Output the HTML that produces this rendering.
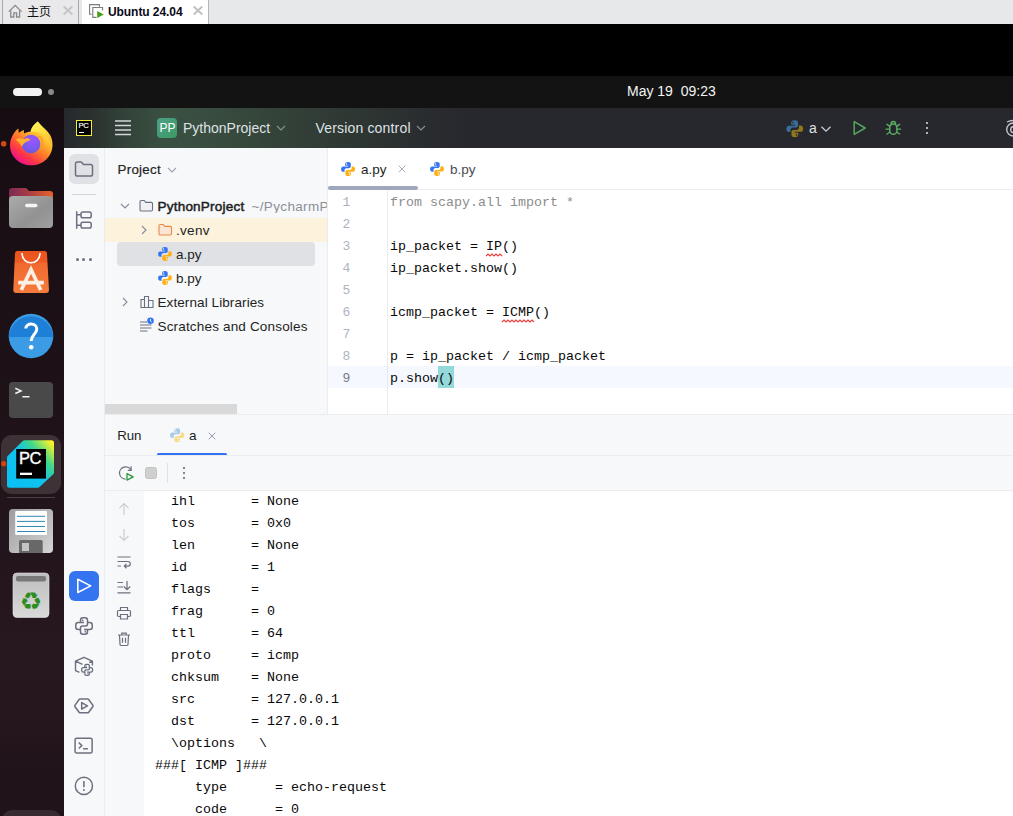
<!DOCTYPE html>
<html lang="en">
<head>
<meta charset="utf-8">
<title>Ubuntu 24.04</title>
<style>
*{box-sizing:border-box;margin:0;padding:0}
html,body{width:1013px;height:816px;overflow:hidden;background:#000}
body{position:relative;font-family:"Liberation Sans","Noto Sans CJK SC",sans-serif;font-size:13px;color:#000}
.abs{position:absolute}
.t{position:absolute;white-space:pre;line-height:1}
svg{position:absolute;overflow:visible}
/* vm tab bar */
#vmbar{left:0;top:0;width:1013px;height:24px;background:#e7e8ea}
#vmtab1{left:2px;top:0;width:77px;height:24px;background:#e9e9eb;border-left:1px solid #a9a9a9;border-right:1px solid #a9a9a9}
#vmtab2{left:82px;top:0;width:127px;height:24px;background:#fff;border-right:1px solid #b5b5b5}
/* gnome */
#gbar{left:0;top:76px;width:1013px;height:32px;background:#131313}
#dock{left:0;top:108px;width:64px;height:708px;background:linear-gradient(180deg,#160d12 0%,#1b1016 27%,#21141b 55%,#27171f 76%,#26161e 86%,#20131a 95%,#20131a 100%)}
/* pycharm */
#ptitle{left:64px;top:108px;width:949px;height:39.5px;background:linear-gradient(90deg,#26282d 0px,#2b322f 30px,#33433a 62px,#3a5041 100px,#394e40 140px,#344339 210px,#2e3733 290px,#292b2f 370px,#27282e 410px)}
#pleft{left:64px;top:147.5px;width:41px;height:668.5px;background:#f7f8fa;border-right:1px solid #ebecf0}
#proj{left:105px;top:147.5px;width:223px;height:266.5px;background:#f7f8fa;border-right:1px solid #ebecf0}
#editor{left:328px;top:147.5px;width:685px;height:266.5px;background:#fff}
#run{left:105px;top:414px;width:908px;height:402px;background:#f7f8fa;border-top:1px solid #ebecf0}
#console{left:144px;top:491px;width:869px;height:325px;background:#fff}
.mono{font-family:"Liberation Mono",monospace;font-size:13.333px;line-height:22px;white-space:pre;position:absolute;color:#080808}
.ui{color:#1e1f22}
</style>
</head>
<body>
<!-- VMware tab bar -->
<div class="abs" id="vmbar"></div>
<div class="abs" id="vmtab1"></div>
<div class="abs" id="vmtab2"></div>
<span class="t" id="t_home" style="left:27px;top:6px;font-size:12px;color:#111">主页</span>
<span class="t" id="t_ubu" style="left:108px;top:6px;font-size:12px;font-weight:bold;color:#0a0a1a;letter-spacing:-0.07px">Ubuntu 24.04</span>

<!-- GNOME top bar -->
<div class="abs" id="gbar"></div>
<div class="abs" style="left:13px;top:87.6px;width:29px;height:8.6px;border-radius:4.3px;background:#f2f2f2"></div>
<div class="abs" style="left:48px;top:89px;width:6px;height:6px;border-radius:3px;background:#8a8a8a"></div>
<span class="t" id="t_clock" style="left:627px;top:84px;font-size:14px;color:#f4f4f4">May 19  09:23</span>

<!-- Dock -->
<div class="abs" id="dock"></div>

<!-- PyCharm -->
<div class="abs" id="ptitle"></div>
<div class="abs" id="pleft"></div>
<div class="abs" id="proj"></div>
<div class="abs" id="editor"></div>
<div class="abs" id="run"></div>
<div class="abs" id="console"></div>


<!-- title bar content -->
<div class="abs" style="left:76px;top:120px;width:16px;height:16px;background:#000;border:1px solid #f3ec30"></div>
<span class="t" id="t_pclogo" style="left:78.6px;top:122px;font-size:7.6px;color:#fff;letter-spacing:-0.5px;-webkit-text-stroke:0.15px #fff">PC</span>
<div class="abs" style="left:79px;top:131.5px;width:5px;height:1.2px;background:#fff"></div>
<svg style="left:115px;top:118px;filter:blur(0.3px)" width="16" height="20" viewBox="0 0 16 20"><path d="M0 3.1 H16 M0 7.6 H16 M0 12.1 H16 M0 16.6 H16" stroke="#d3d5da" stroke-width="1.5"/></svg>
<div class="abs" style="left:157px;top:118px;width:20px;height:20px;border-radius:4px;background:linear-gradient(135deg,#4ca088,#3c9a63)"></div>
<span class="t" id="t_pp" style="left:159.5px;top:122px;font-size:12px;color:#fff">PP</span>
<span class="t" id="t_pname" style="left:183px;top:121px;font-size:14px;color:#dfe1e5">PythonProject</span>
<svg style="left:276px;top:125px" width="10" height="6" viewBox="0 0 10 6"><path d="M1 1 L5 5 L9 1" fill="none" stroke="#8d9096" stroke-width="1.1"/></svg>
<span class="t" id="t_vc" style="left:315.5px;top:121px;font-size:14px;color:#dfe1e5;letter-spacing:0.17px">Version control</span>
<svg style="left:416px;top:125px" width="10" height="6" viewBox="0 0 10 6"><path d="M1 1 L5 5 L9 1" fill="none" stroke="#8d9096" stroke-width="1.1"/></svg>
<span class="t" id="t_cfg" style="left:809px;top:121px;font-size:14px;color:#dfe1e5">a</span>
<svg style="left:821px;top:125.5px" width="10" height="6" viewBox="0 0 10 6"><path d="M0.5 0.8 L5 5.2 L9.5 0.8" fill="none" stroke="#ced0d6" stroke-width="1.2"/></svg>
<svg style="left:852px;top:120px" width="16" height="16" viewBox="0 0 16 16"><path d="M2.2 1.6 L13.2 8 L2.2 14.4 Z" fill="none" stroke="#57a55a" stroke-width="1.5" stroke-linejoin="round"/></svg>
<svg id="bug" style="left:885px;top:120px" width="16" height="16" viewBox="0 0 16 16" fill="none" stroke="#5bae60" stroke-width="1.4" stroke-linecap="round"><path d="M4.7 7.6 a3.6 3.6 0 0 1 7.2 0 v3.1 a3.6 3.6 0 0 1 -7.2 0 Z"/><path d="M6.1 3.7 a2.2 2.2 0 0 1 4.4 0" stroke-width="1.6"/><path d="M4.7 9.1 H1 M11.9 9.1 H15.6 M5 6.3 L2 4.3 M11.6 6.3 L14.6 4.3 M5 12 L2 14 M11.6 12 L14.6 14"/></svg>
<div class="abs" style="left:925.8px;top:121.5px;width:2.4px;height:2.4px;border-radius:1.2px;background:#dfe1e5"></div>
<div class="abs" style="left:925.8px;top:126.8px;width:2.4px;height:2.4px;border-radius:1.2px;background:#dfe1e5"></div>
<div class="abs" style="left:925.8px;top:132px;width:2.4px;height:2.4px;border-radius:1.2px;background:#dfe1e5"></div>
<svg style="left:1000px;top:116px" width="20" height="20" viewBox="0 0 20 20" fill="none" stroke="#c4c6cc" stroke-width="1.4"><circle cx="13.2" cy="13.5" r="6.5"/><circle cx="13.7" cy="13.7" r="3"/><path d="M7 6 Q10 4.3 14 4.5"/></svg>

<svg width="0" height="0" style="left:0;top:0"><defs>
<symbol id="py" viewBox="0 0 16 16">
<path d="M8 1.1C6 1.1 5.1 1.8 5.1 3.1V4.65H8.1V5.45H3.2C1.8 5.45 1.1 6.5 1.1 8.05C1.1 9.6 1.8 10.65 3.2 10.65H4.5V9.1C4.5 7.9 5.4 7.05 6.6 7.05H8.9C9.9 7.05 10.7 6.3 10.7 5.3V3.1C10.7 1.8 9.9 1.1 8 1.1Z" fill="#3574f0"/>
<circle cx="6.5" cy="2.95" r=".7" fill="#fff"/>
<path d="M8 14.9C10 14.9 10.9 14.2 10.9 12.9V11.35H7.9V10.55H12.8C14.2 10.55 14.9 9.5 14.9 7.95C14.9 6.4 14.2 5.35 12.8 5.35H11.5V6.9C11.5 8.1 10.6 8.95 9.4 8.95H7.1C6.1 8.95 5.3 9.7 5.3 10.7V12.9C5.3 14.2 6.1 14.9 8 14.9Z" fill="#ffaf0f"/>
<circle cx="9.5" cy="13.05" r=".7" fill="#fff"/>
</symbol>
<symbol id="pyreal" viewBox="0 0 16 16">
<path d="M8 1.1C6 1.1 5.1 1.8 5.1 3.1V4.65H8.1V5.45H3.2C1.8 5.45 1.1 6.5 1.1 8.05C1.1 9.6 1.8 10.65 3.2 10.65H4.5V9.1C4.5 7.9 5.4 7.05 6.6 7.05H8.9C9.9 7.05 10.7 6.3 10.7 5.3V3.1C10.7 1.8 9.9 1.1 8 1.1Z" fill="#3a6d95"/>
<circle cx="6.5" cy="2.95" r=".7" fill="#2b2d30"/>
<path d="M8 14.9C10 14.9 10.9 14.2 10.9 12.9V11.35H7.9V10.55H12.8C14.2 10.55 14.9 9.5 14.9 7.95C14.9 6.4 14.2 5.35 12.8 5.35H11.5V6.9C11.5 8.1 10.6 8.95 9.4 8.95H7.1C6.1 8.95 5.3 9.7 5.3 10.7V12.9C5.3 14.2 6.1 14.9 8 14.9Z" fill="#92751f"/>
<circle cx="9.5" cy="13.05" r=".7" fill="#2b2d30"/>
</symbol>
<symbol id="pyfade" viewBox="0 0 16 16">
<path d="M8 1.1C6 1.1 5.1 1.8 5.1 3.1V4.65H8.1V5.45H3.2C1.8 5.45 1.1 6.5 1.1 8.05C1.1 9.6 1.8 10.65 3.2 10.65H4.5V9.1C4.5 7.9 5.4 7.05 6.6 7.05H8.9C9.9 7.05 10.7 6.3 10.7 5.3V3.1C10.7 1.8 9.9 1.1 8 1.1Z" fill="#a9cbe5"/>
<circle cx="6.5" cy="2.95" r=".7" fill="#f7f8fa"/>
<path d="M8 14.9C10 14.9 10.9 14.2 10.9 12.9V11.35H7.9V10.55H12.8C14.2 10.55 14.9 9.5 14.9 7.95C14.9 6.4 14.2 5.35 12.8 5.35H11.5V6.9C11.5 8.1 10.6 8.95 9.4 8.95H7.1C6.1 8.95 5.3 9.7 5.3 10.7V12.9C5.3 14.2 6.1 14.9 8 14.9Z" fill="#f8dc8b"/>
<circle cx="9.5" cy="13.05" r=".7" fill="#f7f8fa"/>
</symbol>
<symbol id="chd" viewBox="0 0 10 6"><path d="M1 1 L5 5 L9 1" fill="none" stroke="#868a99" stroke-width="1.1"/></symbol>
<symbol id="chr" viewBox="0 0 6 10"><path d="M1 1 L5 5 L1 9" fill="none" stroke="#868a99" stroke-width="1.1"/></symbol>
</defs></svg>
<svg style="left:785px;top:118.5px" width="19.5" height="19.5"><use href="#pyreal"/></svg>

<!-- Project tool window -->
<div class="abs" style="left:69px;top:154px;width:30px;height:30px;border-radius:6px;background:#dfe1e5"></div>
<svg style="left:74px;top:159px" width="20" height="20" viewBox="0 0 20 20"><path d="M1.5 4.8 a1.8 1.8 0 0 1 1.8-1.8 h4 l2.2 2.6 h7.2 a1.8 1.8 0 0 1 1.8 1.8 v7.8 a1.8 1.8 0 0 1 -1.8 1.8 h-13.4 a1.8 1.8 0 0 1 -1.8-1.8 Z" fill="none" stroke="#6c707e" stroke-width="1.5"/></svg>
<div class="abs" style="left:72px;top:194px;width:24px;height:1px;background:#d3d5db"></div>
<svg style="left:74px;top:210px" width="20" height="20" viewBox="0 0 20 20" fill="none" stroke="#6c707e" stroke-width="1.5"><path d="M2.7 1.2 V18.8 M2.7 4.85 H7 M2.7 15.150 H7"/><rect x="7" y="1.950" width="10.2" height="5.8" rx="1.8"/><rect x="7" y="12.25" width="10.2" height="5.8" rx="1.8"/></svg>
<div class="abs" style="left:76px;top:257.9px;width:3px;height:3px;border-radius:1.5px;background:#6c707e"></div>
<div class="abs" style="left:82.2px;top:257.9px;width:3px;height:3px;border-radius:1.5px;background:#6c707e"></div>
<div class="abs" style="left:88.9px;top:257.9px;width:3px;height:3px;border-radius:1.5px;background:#6c707e"></div>

<span class="t ui" id="t_project" style="left:117.5px;top:163px;font-size:13.3px;letter-spacing:0.3px;color:#1e1f22;-webkit-text-stroke:0.2px #1e1f22">Project</span>
<svg style="left:167px;top:167px;opacity:.8" width="10" height="6"><use href="#chd"/></svg>

<div class="abs" style="left:105px;top:218px;width:222px;height:24px;background:#fdf3dd"></div>
<div class="abs" style="left:117px;top:242.2px;width:198px;height:23.5px;border-radius:4px;background:#dfe1e5"></div>

<svg style="left:120px;top:203px" width="10" height="6"><use href="#chd"/></svg>
<svg style="left:138.5px;top:198.5px" width="15" height="14" viewBox="0 0 15 14"><path d="M1 2.7 a1.2 1.2 0 0 1 1.2-1.2 h3 l1.6 1.9 h5.5 a1.2 1.2 0 0 1 1.2 1.2 v6.2 a1.2 1.2 0 0 1 -1.2 1.2 h-10.1 a1.2 1.2 0 0 1 -1.2-1.2 Z" fill="#f0f1f4" stroke="#6c707e" stroke-width="1.1"/></svg>
<span class="t" id="t_root" style="left:157.5px;top:199.7px;font-size:13.5px;color:#1e1f22;letter-spacing:0.22px;-webkit-text-stroke:0.5px #1e1f22">PythonProject</span>
<span class="t" id="t_path" style="left:251.5px;top:199.7px;font-size:13.5px;color:#8c8f98;letter-spacing:0.35px;width:75.5px;overflow:hidden">~/PycharmP</span>

<svg style="left:141px;top:225px" width="6" height="10"><use href="#chr"/></svg>
<svg style="left:157.5px;top:222.5px" width="15" height="14" viewBox="0 0 15 14"><path d="M1 2.7 a1.2 1.2 0 0 1 1.2-1.2 h3 l1.6 1.9 h5.5 a1.2 1.2 0 0 1 1.2 1.2 v6.2 a1.2 1.2 0 0 1 -1.2 1.2 h-10.1 a1.2 1.2 0 0 1 -1.2-1.2 Z" fill="#fbe6d6" stroke="#e8894a" stroke-width="1.1"/></svg>
<span class="t ui" id="t_venv" style="left:176px;top:223.7px;font-size:13.5px;letter-spacing:0.3px">.venv</span>

<svg style="left:157px;top:246px" width="16" height="16"><use href="#py"/></svg>
<span class="t ui" id="t_apy" style="left:176px;top:247.7px;font-size:13.5px">a.py</span>
<svg style="left:157px;top:270px" width="16" height="16"><use href="#py"/></svg>
<span class="t ui" id="t_bpy" style="left:176px;top:271.7px;font-size:13.5px">b.py</span>

<svg style="left:122px;top:297px" width="6" height="10"><use href="#chr"/></svg>
<svg style="left:138.8px;top:294.3px" width="16" height="16" viewBox="0 0 16 16" fill="none" stroke="#6c707e" stroke-width="1.1"><path d="M2 13.5 V5.5 H5.5 V13.5 Z M5.5 13.5 V2.5 H9.5 V13.5 Z M9.5 13.5 V6.5 H14 V13.5 Z"/></svg>
<span class="t ui" id="t_ext" style="left:157.5px;top:295.7px;font-size:13.5px;letter-spacing:0.09px">External Libraries</span>

<svg style="left:138.3px;top:316.8px" width="16" height="16" viewBox="0 0 16 16" fill="none" stroke="#6c707e" stroke-width="1.1"><path d="M2 5 H9 M2 8 H13.5 M2 11 H13.5 M2 14 H9.5"/><circle cx="12.5" cy="3.8" r="3.3" fill="#3574f0" stroke="none"/><path d="M12.5 2 V4 L13.7 4.8" stroke="#fff" stroke-width="0.9"/></svg>
<span class="t ui" id="t_scr" style="left:157.5px;top:319.7px;font-size:13.5px;letter-spacing:0.17px">Scratches and Consoles</span>

<div class="abs" style="left:105px;top:404px;width:132px;height:10px;background:#d9d9d9"></div>

<!-- Editor tabs -->
<svg style="left:340px;top:160.8px" width="16.2" height="16.2"><use href="#py"/></svg>
<span class="t" id="t_tab1" style="left:361px;top:163px;font-size:13.5px;color:#1e1f22">a.py</span>
<svg style="left:398px;top:165px" width="8" height="8" viewBox="0 0 8 8"><path d="M0.7 0.7 L7.3 7.3 M7.3 0.7 L0.7 7.3" stroke="#a8adbd" stroke-width="1"/></svg>
<svg style="left:429px;top:161px" width="16" height="16"><use href="#py"/></svg>
<span class="t" id="t_tab2" style="left:450px;top:163px;font-size:13.5px;color:#494b57">b.py</span>
<div class="abs" style="left:328px;top:189px;width:685px;height:1px;background:#ebecf0"></div>
<div class="abs" style="left:328px;top:186.2px;width:90px;height:3.6px;border-radius:2px;background:#a0a6bb"></div>
<div class="abs" style="left:387px;top:190px;width:1px;height:224px;background:#ebecf0"></div>
<div class="abs" style="left:328px;top:365.8px;width:685px;height:22px;background:#f5f8fe"></div>
<div class="abs" style="left:387px;top:365.8px;width:1px;height:22px;background:#e6e9f2"></div>
<div class="abs" style="left:438px;top:365.8px;width:16px;height:22px;background:#93d9d9"></div>
<div class="mono" id="lnums" style="left:342.5px;top:191.7px;color:#aeb3c2;font-size:13px">1
2
3
4
5
6
7
8
<span style="color:#767a8a">9</span></div>
<div class="mono" id="code" style="left:390px;top:191.6px"><span style="color:#8c8c8c">from scapy.all import *</span>

ip_packet = IP()
ip_packet.show()

icmp_packet = ICMP()

p = ip_packet / icmp_packet
p.show()</div>
<svg style="left:486px;top:253px" width="16" height="4" viewBox="0 0 16 4"><path d="M0 3 L2 1 L4 3 L6 1 L8 3 L10 1 L12 3 L14 1 L16 3" fill="none" stroke="#ea3f3b" stroke-width="1.1"/></svg>
<svg style="left:502px;top:319px" width="32" height="4" viewBox="0 0 32 4"><path d="M0 3 L2 1 L4 3 L6 1 L8 3 L10 1 L12 3 L14 1 L16 3 L18 1 L20 3 L22 1 L24 3 L26 1 L28 3 L30 1 L32 3" fill="none" stroke="#ea3f3b" stroke-width="1.1"/></svg>

<!-- Run tool window -->
<span class="t" id="t_run" style="left:117.3px;top:428.5px;font-size:13.3px;letter-spacing:-0.2px;color:#1e1f22">Run</span>
<svg style="left:168.8px;top:426.8px" width="16.5" height="16.5"><use href="#pyfade"/></svg>
<span class="t" id="t_runa" style="left:189px;top:428.5px;font-size:13.5px;color:#1e1f22">a</span>
<svg style="left:208px;top:432px" width="8" height="8" viewBox="0 0 8 8"><path d="M0.7 0.7 L7.3 7.3 M7.3 0.7 L0.7 7.3" stroke="#999db2" stroke-width="1"/></svg>
<div class="abs" style="left:157px;top:452.5px;width:70px;height:3.7px;border-radius:2px;background:#3574f0"></div>
<div class="abs" style="left:105px;top:455.2px;width:908px;height:1px;background:#ebecf0"></div>
<div class="abs" style="left:105px;top:490px;width:908px;height:1px;background:#ebecf0"></div>
<!-- run toolbar -->
<svg style="left:117.5px;top:465px" width="16" height="16" viewBox="0 0 16 16" fill="none"><path d="M13.1 5.3 A6.1 6.1 0 1 0 7.6 14.1" stroke="#6c707e" stroke-width="1.2"/><path d="M13.1 1.2 V5.3 H9.8" stroke="#6c707e" stroke-width="1.2"/><path d="M9 8.6 V15.1 L15.2 11.85 Z" stroke="#2c9a3e" stroke-width="1.3" stroke-linejoin="round" fill="#f7f8fa"/></svg>
<div class="abs" style="left:145px;top:467px;width:12px;height:12px;border-radius:2.5px;background:#cfcfcf;border:1px solid #c3c3c3"></div>
<div class="abs" style="left:167px;top:463px;width:1px;height:20px;background:#dfe1e5"></div>
<div class="abs" style="left:182.9px;top:466.9px;width:2.2px;height:2.2px;border-radius:.7px;background:#6c707e"></div>
<div class="abs" style="left:182.9px;top:471.9px;width:2.2px;height:2.2px;border-radius:.7px;background:#6c707e"></div>
<div class="abs" style="left:182.9px;top:476.9px;width:2.2px;height:2.2px;border-radius:.7px;background:#6c707e"></div>
<!-- console -->
<div class="mono" id="cons" style="left:155px;top:491px">  ihl       = None
  tos       = 0x0
  len       = None
  id        = 1
  flags     = 
  frag      = 0
  ttl       = 64
  proto     = icmp
  chksum    = None
  src       = 127.0.0.1
  dst       = 127.0.0.1
  \options   \
###[ ICMP ]###
     type      = echo-request
     code      = 0</div>

<!-- run gutter icons -->
<svg style="left:116px;top:500.7px" width="16" height="16" viewBox="0 0 16 16" fill="none" stroke="#cdced3" stroke-width="1.2"><path d="M8 14 V2.5 M3.5 7 L8 2.5 L12.5 7"/></svg>
<svg style="left:116px;top:527.4px" width="16" height="16" viewBox="0 0 16 16" fill="none" stroke="#cdced3" stroke-width="1.2"><path d="M8 2 V13.5 M3.5 9 L8 13.5 L12.5 9"/></svg>
<svg style="left:116px;top:553.6px" width="16" height="16" viewBox="0 0 16 16" fill="none" stroke="#6c707e" stroke-width="1.2"><path d="M1.5 3 H14.5 M1.5 7.5 H12 a2.3 2.3 0 0 1 0 4.6 H8.5 M10.5 10 L8.3 12.1 L10.5 14.2 M1.5 12 H5"/></svg>
<svg style="left:116px;top:578.6px" width="16" height="16" viewBox="0 0 16 16" fill="none" stroke="#6c707e" stroke-width="1.2"><path d="M1.5 3.5 H7 M1.5 8 H7 M1.5 13.8 H14.5 M11 2 V10.5 M7.8 7.5 L11 10.7 L14.2 7.5"/></svg>
<svg style="left:116px;top:604.8px" width="16" height="16" viewBox="0 0 16 16" fill="none" stroke="#6c707e" stroke-width="1.2"><path d="M4.5 5.5 V2.5 H11.5 V5.5 M4.5 11.5 H2.7 a1.2 1.2 0 0 1 -1.2 -1.2 V6.7 a1.2 1.2 0 0 1 1.2 -1.2 H13.3 a1.2 1.2 0 0 1 1.2 1.2 V10.3 a1.2 1.2 0 0 1 -1.2 1.2 H11.5 M4.5 9.5 H11.5 V14 H4.5 Z"/></svg>
<svg style="left:116px;top:630.8px" width="16" height="16" viewBox="0 0 16 16" fill="none" stroke="#6c707e" stroke-width="1.2"><path d="M2 4 H14 M5.8 4 V2.2 H10.2 V4 M3.5 4 L4 13.3 a1.2 1.2 0 0 0 1.2 1.2 H10.8 a1.2 1.2 0 0 0 1.2 -1.2 L12.5 4 M6.5 6.8 V11.7 M9.5 6.8 V11.7"/></svg>

<!-- left toolbar bottom icons -->
<div class="abs" style="left:69px;top:571px;width:30px;height:30px;border-radius:6px;background:#3574f0"></div>
<svg style="left:76px;top:578px" width="16" height="16" viewBox="0 0 16 16"><path d="M1.8 1.3 V14.5 L14.7 7.9 Z" fill="none" stroke="#fff" stroke-width="1.6" stroke-linejoin="round"/></svg>
<svg id="ic_py" style="left:74px;top:616px" width="20" height="20" viewBox="0 0 20 20" fill="none" stroke="#6c707e" stroke-width="1.5" stroke-linejoin="round"><path d="M6.5 6.5 V4.25 a2.5 2.5 0 0 1 2.5-2.5 h2 a2.5 2.5 0 0 1 2.5 2.5 V8 a2 2 0 0 1 -2 2 H8.5 a2 2 0 0 0 -2 2 V15.75 a2.5 2.5 0 0 0 2.5 2.5 h2 a2.5 2.5 0 0 0 2.5 -2.5 V13.5"/><path d="M10 6.5 H4.25 a2.5 2.5 0 0 0 -2.5 2.5 v2 a2.5 2.5 0 0 0 2.5 2.5 H6.5"/><path d="M10 13.5 H15.75 a2.5 2.5 0 0 0 2.5 -2.5 v-2 a2.5 2.5 0 0 0 -2.5 -2.5 H13.5"/><circle cx="8.7" cy="4.3" r=".85" fill="#6c707e" stroke="none"/><circle cx="11.3" cy="15.7" r=".85" fill="#6c707e" stroke="none"/></svg>
<svg id="ic_pkg" style="left:74px;top:656px" width="20" height="20" viewBox="0 0 20 20" fill="none" stroke="#6c707e" stroke-width="1.4" stroke-linejoin="round"><path d="M5.4 16.3 L1.5 14.6 V5.2 L9.970 1.3 L18.4 5.2 V9.4 M1.5 5.2 L8.5 8.3 M18.4 5.2 L15.3 6.5"/><g transform="translate(6.5,7.3) scale(0.66)" stroke-width="2"><path d="M6.5 6.5 V4.25 a2.5 2.5 0 0 1 2.5-2.5 h2 a2.5 2.5 0 0 1 2.5 2.5 V8 a2 2 0 0 1 -2 2 H8.5 a2 2 0 0 0 -2 2 V15.75 a2.5 2.5 0 0 0 2.5 2.5 h2 a2.5 2.5 0 0 0 2.5 -2.5 V13.5"/><path d="M10 6.5 H4.25 a2.5 2.5 0 0 0 -2.5 2.5 v2 a2.5 2.5 0 0 0 2.5 2.5 H6.5"/><path d="M10 13.5 H15.75 a2.5 2.5 0 0 0 2.5 -2.5 v-2 a2.5 2.5 0 0 0 -2.5 -2.5 H13.5"/><circle cx="8.7" cy="4.3" r=".9" fill="#6c707e" stroke="none"/><circle cx="11.3" cy="15.7" r=".9" fill="#6c707e" stroke="none"/></g></svg>
<svg id="ic_svc" style="left:74.1px;top:696px" width="19.8" height="19.8" viewBox="0 0 18 18" fill="none" stroke="#6c707e" stroke-width="1.4" stroke-linejoin="round"><path d="M5.5 2.7 H12.5 a1 1 0 0 1 .85 .5 L17.2 8.5 a1 1 0 0 1 0 1 L13.35 14.8 a1 1 0 0 1 -.85 .5 H5.5 a1 1 0 0 1 -.85 -.5 L.8 9.5 a1 1 0 0 1 0 -1 L4.65 3.2 a1 1 0 0 1 .85 -.5 Z"/><path d="M7 6 L12.2 9 L7 12 Z"/></svg>
<svg id="ic_term" style="left:74.4px;top:736.4px" width="19.2" height="19.2" viewBox="0 0 18 18" fill="none" stroke="#6c707e" stroke-width="1.4"><rect x="1" y="2" width="16" height="14" rx="1.5"/><path d="M4.5 6.2 L7.3 9 L4.5 11.8 M8.5 12 H13"/></svg>
<svg id="ic_prob" style="left:74.1px;top:776.1px" width="19.8" height="19.8" viewBox="0 0 18 18" fill="none" stroke="#6c707e" stroke-width="1.35"><circle cx="9" cy="9" r="7.8"/><path d="M9 4.5 V10.2" stroke-width="1.4"/><circle cx="9" cy="12.8" r=".9" fill="#6c707e" stroke="none"/></svg>

<!-- Dock icons -->
<svg id="dk_ff" style="left:0;top:112px" width="64" height="64" viewBox="0 0 64 64">
<defs>
<linearGradient id="ffb" x1="0.85" y1="0.1" x2="0.25" y2="0.95"><stop offset="0" stop-color="#fff44f"/><stop offset="0.3" stop-color="#ffbd2e"/><stop offset="0.55" stop-color="#ff7a2a"/><stop offset="0.8" stop-color="#ff3647"/><stop offset="1" stop-color="#f0128a"/></linearGradient>
<radialGradient id="ffg" cx="0.55" cy="0.3" r="0.8"><stop offset="0" stop-color="#9a57ff"/><stop offset="0.6" stop-color="#7a5af0"/><stop offset="1" stop-color="#5b5bd0"/></radialGradient>
<linearGradient id="fff" x1="0.3" y1="0" x2="0.8" y2="1"><stop offset="0" stop-color="#fff45a"/><stop offset="0.6" stop-color="#ffd83a"/><stop offset="1" stop-color="#ffa52c"/></linearGradient>
</defs>
<circle cx="3.7" cy="31.8" r="2.8" fill="#cf4a12"/>
<path d="M18.3 16.5 L18.8 21 C20.5 19.5 22 18.8 23.8 18 L24 21.5 C26 20.3 28.5 19.8 30.5 19.8 C31.5 15.5 34 12.3 37.8 9.5 C40.5 13.5 44.5 16.5 46.8 19 C47.8 20 48.3 20.5 48.5 21 C51 23.5 52.5 28 52.5 33 C52.5 44.5 43 53.3 31.3 53.3 C19.5 53.3 10 44.5 10 33.5 C10 27 13.5 20 18.3 16.5 Z" fill="url(#ffb)"/>
<path d="M30.5 19.8 C31.5 15.5 34 12.3 37.8 9.5 C40.5 13.5 44.5 16.5 46.8 19 C50 22.5 51.5 27 51 32 C50 27 47 23.5 43 22 C39 20 34 19.5 30.5 19.8 Z" fill="url(#fff)"/>
<circle cx="31" cy="32" r="9.3" fill="url(#ffg)"/>
<path d="M15.5 27.5 C18 26 22 26.3 24.5 27 C27 25 29 26.5 30.5 27.8 C29 29 27.5 29.5 26 30 C23.5 31 22.5 33 22 35 C20.5 32 18 29.5 15.5 27.5 Z" fill="#ffb02e"/>
<path d="M35.5 24.5 C38 24 39.5 25.5 40 26.5 C42.5 30 42 36 39 39.5 C43.5 37 45 30 42 25.5 C40.5 23.5 37.5 23 35.5 24.5 Z" fill="#ff9a2e" opacity=".9"/>
</svg>

<svg id="dk_files" style="left:0;top:180px" width="64" height="64" viewBox="0 0 64 64">
<defs><linearGradient id="flb" x1="0" y1="0" x2="1" y2="0"><stop offset="0" stop-color="#7a2a55"/><stop offset="0.4" stop-color="#a33a48"/><stop offset="1" stop-color="#e8632a"/></linearGradient>
<linearGradient id="flf" x1="0" y1="0" x2="1" y2="1"><stop offset="0" stop-color="#ababab"/><stop offset="0.6" stop-color="#929292"/><stop offset="1" stop-color="#a0a0a0"/></linearGradient></defs>
<path d="M9 11 a3 3 0 0 1 3 -3 h13 a3 3 0 0 1 2.5 1.3 l1.3 1.7 h21.2 a3 3 0 0 1 3 3 v20 h-44 Z" fill="url(#flb)"/>
<rect x="9" y="16" width="44" height="32" rx="4" fill="url(#flf)"/>
<rect x="25" y="23.7" width="12.5" height="3.6" rx="1.8" fill="#f5f5f5"/>
</svg>

<svg id="dk_sw" style="left:0;top:244px" width="64" height="64" viewBox="0 0 64 64">
<defs><linearGradient id="swg" x1="0" y1="0" x2="0" y2="1"><stop offset="0" stop-color="#ea541e"/><stop offset="0.27" stop-color="#ec5a22"/><stop offset="0.28" stop-color="#f0692e"/><stop offset="1" stop-color="#f37c3c"/></linearGradient></defs>
<path d="M17.5 7 H44.5 a2.5 2.5 0 0 1 2.5 2.3 L49 46 a3 3 0 0 1 -3 3 H16.3 a3 3 0 0 1 -3 -3 L15 9.3 a2.5 2.5 0 0 1 2.5 -2.3 Z" fill="url(#swg)"/>
<path d="M22 9 C22 22 40 22 40 9" fill="none" stroke="#fff" stroke-width="1.6"/>
<path d="M21.3 46 L31 25.5 L40.7 46 M18.2 38.6 H43.8" fill="none" stroke="#fdeee6" stroke-width="3.7" stroke-linejoin="miter"/>
</svg>

<svg id="dk_help" style="left:0;top:308px" width="64" height="64" viewBox="0 0 64 64">
<circle cx="31" cy="28" r="22.3" fill="#3b9be4"/>
<path d="M8.75 29 A22.3 22.3 0 0 1 53.25 29 Z" fill="#1e7fd7"/>
<path d="M25.8 20.5 C25.8 14.5 36.8 14.5 36.8 21 C36.8 26 31.2 26.5 31.2 33" fill="none" stroke="#fff" stroke-width="3"/>
<circle cx="31.2" cy="39.3" r="2.3" fill="#fff"/>
</svg>

<svg id="dk_term" style="left:0;top:372px" width="64" height="64" viewBox="0 0 64 64">
<rect x="9" y="10" width="44" height="36" rx="4" fill="#494949"/>
<path d="M15.3 16.3 L21 18.9 L15.3 21.5" fill="none" stroke="#f2f2f2" stroke-width="1.5"/>
<rect x="22.3" y="24" width="7.2" height="1.5" fill="#f2f2f2"/>
</svg>

<div class="abs" style="left:1px;top:434.5px;width:60px;height:59px;border-radius:11px;background:#3f3237"></div>
<svg id="dk_pc" style="left:0;top:432px" width="64" height="64" viewBox="0 0 64 64">
<defs><linearGradient id="pcg" x1="0.1" y1="0.8" x2="0.95" y2="0.05"><stop offset="0" stop-color="#0bc0f2"/><stop offset="0.45" stop-color="#10c4ee"/><stop offset="0.7" stop-color="#3fd68a"/><stop offset="1" stop-color="#fcf42a"/></linearGradient></defs>
<path d="M24.5 8.3 H51.5 a2.5 2.5 0 0 1 2.5 2.5 V40.5 a2.5 2.5 0 0 1 -.8 1.8 L39.5 55 a2.5 2.5 0 0 1 -1.7 .7 H9.5 a2.5 2.5 0 0 1 -2.5 -2.5 V25.8 a2.5 2.5 0 0 1 .7 -1.7 L22.7 9 a2.5 2.5 0 0 1 1.8 -.7 Z" fill="url(#pcg)"/>
<rect x="16.2" y="17" width="29.8" height="29.6" fill="#000"/>
<rect x="20" y="40.7" width="12" height="2.3" fill="#fff"/>
<circle cx="3.6" cy="31.7" r="2.6" fill="#d3420f"/>
</svg>
<span class="t" id="t_dkpc" style="left:19px;top:450px;font-size:16.5px;color:#fff;letter-spacing:-0.5px;-webkit-text-stroke:0.35px #fff">PC</span>
<div class="abs" style="left:7px;top:497px;width:48px;height:1px;background:#4b4045"></div>

<svg id="dk_disk" style="left:0;top:500px" width="64" height="64" viewBox="0 0 64 64">
<defs><linearGradient id="dkg" x1="0" y1="0" x2="1" y2="1"><stop offset="0" stop-color="#9c9c9c"/><stop offset="0.5" stop-color="#b8b8b8"/><stop offset="1" stop-color="#d6d6d6"/></linearGradient></defs>
<rect x="9" y="9" width="44" height="44" rx="4" fill="url(#dkg)"/>
<rect x="15.2" y="11" width="31.8" height="24" rx="1" fill="#fdfdfd"/>
<path d="M17 16.3 H45 M17 21.4 H45 M17 26.5 H45 M17 31.5 H45" stroke="#1a7aa8" stroke-width="0.9"/>
<path d="M19 53 V41.5 a1.5 1.5 0 0 1 1.5 -1.5 H41.2 a1.5 1.5 0 0 1 1.5 1.5 V53 Z" fill="#686868"/>
<rect x="22" y="43" width="7" height="8" fill="#c4c4c4"/>
</svg>

<svg id="dk_trash" style="left:0;top:564px" width="64" height="64" viewBox="0 0 64 64">
<defs><linearGradient id="trg" x1="0" y1="0" x2="0" y2="1"><stop offset="0" stop-color="#bdbdbd"/><stop offset="1" stop-color="#dadada"/></linearGradient></defs>
<rect x="13" y="9" width="36" height="44.5" rx="4" fill="url(#trg)" stroke="#e4e4e4" stroke-width="0.6"/>
<rect x="16" y="12" width="30" height="5.6" rx="2" fill="#797979"/>
<text x="31" y="45.6" font-family="DejaVu Sans, sans-serif" font-size="25" fill="#2c8c1f" text-anchor="middle">&#9851;</text>
</svg>
<div class="abs" style="left:1.5px;top:809.5px;width:59px;height:20px;border-radius:10px;background:#372a30"></div>

<!-- VMware tab icons -->
<svg style="left:8px;top:4px" width="15" height="14" viewBox="0 0 15 14" fill="none" stroke="#8a8a8a" stroke-width="1.3"><path d="M0.8 7.6 L7.2 1.3 L13.6 7.6"/><path d="M2.8 6.5 V13 H5.8 V8.8 H8.6 V13 H11.6 V6.5"/></svg>
<svg style="left:62.8px;top:6px" width="10" height="9" viewBox="0 0 10 9"><path d="M0.7 0.5 L9.3 8.5 M9.3 0.5 L0.7 8.5" stroke="#c4c4c4" stroke-width="1.9"/></svg>
<svg style="left:89px;top:4px" width="16" height="15" viewBox="0 0 16 15" fill="none"><path d="M2.7 10.2 H0.6 V0.6 H10.4 V2.7" stroke="#7d7d7d" stroke-width="1.1"/><path d="M7.5 13.4 H3.8 V3.5 H13.6 V6.5" stroke="#7d7d7d" stroke-width="1.1"/><path d="M8.2 7 L14.8 10.5 L8.2 14 Z" fill="#4b9c17"/></svg>
<svg style="left:192.6px;top:6px" width="10" height="9" viewBox="0 0 10 9"><path d="M0.7 0.5 L9.3 8.5 M9.3 0.5 L0.7 8.5" stroke="#bfbfbf" stroke-width="1.9"/></svg>
</body>
</html>
